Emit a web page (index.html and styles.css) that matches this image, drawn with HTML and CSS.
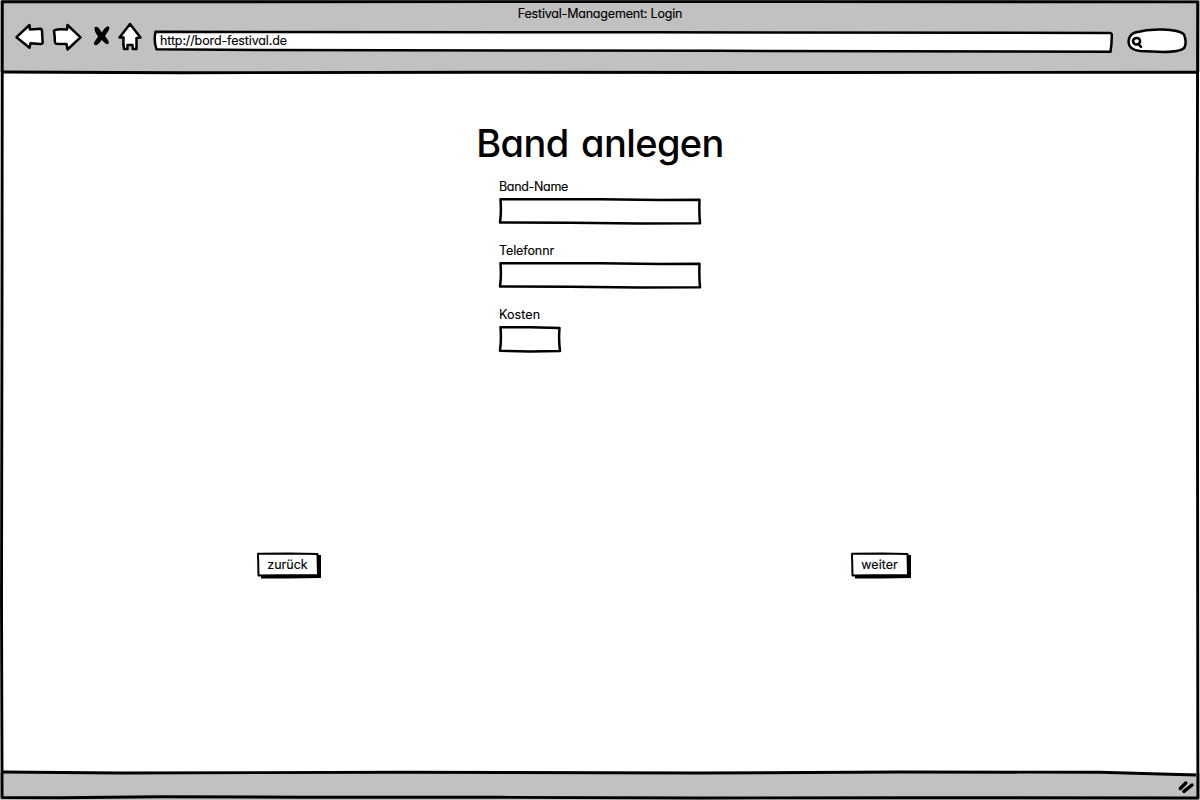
FILE: index.html
```html
<!DOCTYPE html>
<html lang="de">
<head>
<meta charset="utf-8">
<title>Festival-Management: Login</title>
<link rel="stylesheet" href="styles.css">
</head>
<body>
<div class="window">
  <header class="chrome">
    <div class="title"><span class="t-title">Festival-Management: Login</span></div>
    <div class="toolbar">
      <svg class="icons" width="152" height="40" viewBox="0 18 152 40">
        <g class="ink white">
          <path d="M16.500 37.200 L29.500 25 L30 29.500 L40.500 28.700 Q42 29 42 31 L42.700 43 Q42 44.300 40 44 L30.500 43.300 L29.500 47.800 Z"/>
          <path d="M54 30.500 Q58 28.500 67 29.500 L67.500 25 L80.500 37.300 L67.500 49.500 L66.500 44 L56 43.700 Q54.500 43 54.800 38 Z"/>
          <path d="M130 24 L119.500 37.500 L123.500 37.500 Q123 44 124 49 L127.500 49 L127.500 45 L132.500 45 L132.700 49 L136.500 49 L136.500 38 L140.500 37.500 Z"/>
        </g>
        <path class="cross" d="M94.500 27.500 Q97 25.500 99.500 29 L101.800 32.500 Q105 27 107.500 26.200 Q110 26.500 109.200 29.500 L105 36 Q108.500 40 109 42.500 Q108 45.500 105.500 43.500 L101.700 40 Q99.500 43.500 96.500 45.300 Q93.500 45.500 94 42.500 L98 36.500 Q94 31 94.500 27.500 Z"/>
      </svg>
      <div class="address">
        <svg class="sketch" width="962" height="28" viewBox="152 28 962 28"><path class="ink white" d="M155.500 31.800 Q400 32 650 32.300 L1110 33 Q1112 33 1111.800 36 Q1111.800 44 1110.500 51.700 L720 50.800 L540 50.500 L390 50.300 L260 50 L156.500 49.300 Q153.500 41 155.500 31.800 Z"/></svg>
        <span class="t-url">http://bord-festival.de</span>
      </div>
      <svg class="search" width="64" height="30" viewBox="1126 26 64 30">
        <path class="ink white" d="M1135 32.500 Q1148 29 1162 29.500 Q1180 30 1184 34.500 Q1187 42 1184.500 47.500 Q1182 51.500 1164 52 L1140 51 Q1129 50 1128.500 42 Q1128.500 35 1135 32.500 Z"/>
        <path class="ink none" d="M1136.500 38 Q1140.500 38 1140 42 Q1139 45 1135.500 44.500 Q1132.800 43 1133 40.500 Q1134 38 1136.500 38 M1138.500 44 L1141 46.800"/>
      </svg>
    </div>
  </header>
  <main class="page">
    <h1 class="heading"><span>Band anlegen</span></h1>
    <form class="form">
      <label class="field"><span class="t-band">Band-Name</span>
        <svg width="204" height="28" viewBox="498 197 204 28"><path class="ink white" d="M500.500 199.300 L600 199.200 L660 199.900 L699.500 199.800 Q699 212 700 223.300 L640 223.500 L570 222.700 L500 222.600 Q501.500 212 500.500 199.300 Z"/></svg>
      </label>
      <label class="field"><span class="t-tel">Telefonnr</span>
        <svg width="204" height="28" viewBox="498 197 204 28"><path class="ink white" d="M500.500 199.300 L600 199.200 L660 199.900 L699.500 199.800 Q699 212 700 223.300 L640 223.500 L570 222.700 L500 222.600 Q501.500 212 500.500 199.300 Z"/></svg>
      </label>
      <label class="field"><span class="t-cost">Kosten</span>
        <svg width="64" height="28" viewBox="498 325 64 28"><path class="ink white" d="M500.500 327.200 L530 327.300 L559.500 328 Q558.500 340 560 351 L530 351.500 L500 350.700 Q501.500 340 500.500 327.200 Z"/></svg>
      </label>
    </form>
    <div class="actions">
      <button class="btn back" type="button">
        <svg class="sketch" width="66" height="28" viewBox="256 551 66 28"><path d="M261 555 H321 V578 L288 578.500 L261 578.500 Z"/><path class="thin white" d="M258 553.800 L290 553.500 L317.500 554 L318 575 L280 575.300 L258.500 575.500 Z"/></svg>
        <span class="t-back">zurück</span>
      </button>
      <button class="btn next" type="button">
        <svg class="sketch" width="62" height="28" viewBox="850 551 62 28"><path d="M855 555 H911 V578 L882 578.500 L855 578.500 Z"/><path class="thin white" d="M852 553.800 L882 553.500 L907.500 554 L908 575 L872 575.300 L852.500 575.500 Z"/></svg>
        <span class="t-next">weiter</span>
      </button>
    </div>
  </main>
  <footer class="status">
    <svg width="22" height="20" viewBox="1176 776 22 20"><path class="grip" d="M1180.300 788.500 L1185.800 783 M1184 791.300 L1192 785"/></svg>
  </footer>
  <svg class="frame" width="1200" height="800" viewBox="0 0 1200 800">
    <path d="M2.300 1.800 L800 1.600 L1197.700 1.900 L1197.300 200 L1197.900 798 L900 797.700 L700 798 L500 797.300 L300 797.200 L160 796.700 L60 797.800 L2.100 797.500 L1.500 600 L2 300 Z"/>
    <path d="M3 72 L180 72.700 L480 72.300 L800 72.500 L1197 72.200"/>
    <path d="M3 772 L120 773 L400 772.300 L700 773 L900 772 L1100 772.300 L1196 775"/>
  </svg>
</div>
</body>
</html>
```
FILE: styles.css
```css
* { box-sizing: border-box; }
body {
  margin: 0;
  background: #fff;
  color: #000;
  font: 12.500px/16px Inter, "Open Sans", sans-serif;
  font-feature-settings: "cv11" 1;
  -webkit-text-stroke: 0.150px #000;
}
.window {
  position: relative;
  display: flex;
  flex-direction: column;
  width: 1200px;
  height: 800px;
  overflow: hidden;
}
svg { display: block; }
.chrome { height: 72px; background: #c1c1c1; padding-top: 6px; }
.title { height: 12px; line-height: 16px; text-align: center; }
.t-title { letter-spacing: -0.200px; }
.t-url { letter-spacing: -0.130px; }
.t-band { letter-spacing: -0.330px; }
.t-tel { letter-spacing: -0.100px; }
.t-cost { letter-spacing: 0.100px; }
.toolbar { display: flex; align-items: flex-start; }
.icons { flex: none; }
.address {
  position: relative;
  width: 962px;
  height: 28px;
  margin-top: 10px;
  padding: 5px 8px;
}
.address span { position: relative; }
.sketch { position: absolute; left: 0; top: 0; }
.search { margin: 8px 0 0 12px; }
.ink { stroke: #000; stroke-width: 2.500; stroke-linejoin: round; stroke-linecap: round; }
.thin { stroke: #000; stroke-width: 2; stroke-linejoin: round; }
.white { fill: #fff; }
.none { fill: none; }
.cross { fill: #000; }
.page { flex: 1; display: flex; flex-direction: column; }
.heading {
  margin: 46px 0 0;
  height: 60px;
  font-size: 38px;
  font-weight: 500;
  line-height: 50px;
  letter-spacing: -0.600px;
  word-spacing: 3px;
  text-align: center;
  -webkit-text-stroke: 0;
}
.form { margin-left: 498px; }
.field { display: flex; flex-direction: column; gap: 2px; height: 64px; }
.field span { padding: 1px 0 0 1px; }
.actions {
  display: flex;
  justify-content: space-between;
  margin: 181px 288px 0 256px;
}
.btn {
  position: relative;
  height: 28px;
  padding: 0;
  border: 0;
  background: none;
  color: inherit;
  font: inherit;
  font-feature-settings: inherit;
}
.back { width: 66px; padding-right: 3px; }
.next { width: 62px; padding-right: 3px; }
.btn span { position: relative; }
.status {
  display: flex;
  justify-content: flex-end;
  height: 27px;
  padding: 3px 2px 0 0;
  background: #c1c1c1;
}
.grip { fill: none; stroke: #000; stroke-width: 3.500; stroke-linecap: round; }
.frame { position: absolute; inset: 0; pointer-events: none; }
.frame path { fill: none; stroke: #000; stroke-width: 2.900; stroke-linejoin: round; }
```
